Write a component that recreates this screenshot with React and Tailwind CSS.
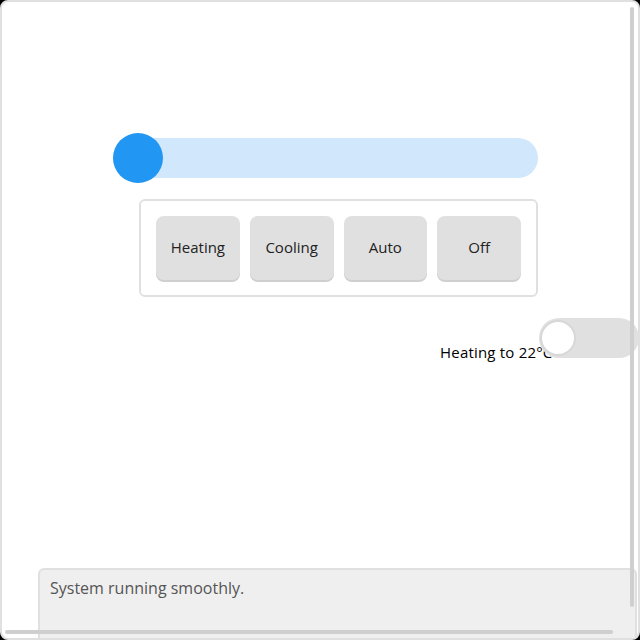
import { useState } from 'react';

const MODES = ['Heating', 'Cooling', 'Auto', 'Off'];

export default function App() {
  const [mode, setMode] = useState('Heating');
  const [on, setOn] = useState(false);

  return (
    <div className="w-[640px] h-[640px] bg-black" style={{ fontFamily: '"Open Sans", sans-serif' }}>
      <div className="relative w-full h-full bg-white border-2 border-[#e0e0e0] rounded-lg overflow-hidden">
        <div className="flex flex-col items-start">
          {/* temperature slider */}
          <div className="relative ml-[111px] mt-[131px] w-[425px] h-[50px] flex items-center">
            <div className="w-full h-[40px] rounded-full bg-[#d1e7fb]" />
            <div className="absolute left-0 top-0 w-[50px] h-[50px] rounded-full bg-[#2196f3]" />
          </div>

          {/* mode buttons */}
          <div className="ml-[137px] mt-[16px] w-[399px] border-2 border-[#e0e0e0] rounded-md p-[15px] flex gap-[10px]">
            {MODES.map(m => (
              <button
                key={m}
                onClick={() => setMode(m)}
                className="flex-1 h-[64px] rounded-lg bg-[#e0e0e0] shadow-[0_2px_0_#cfcfcf] text-[15px] text-[#222] pb-[2px]"
              >
                {m}
              </button>
            ))}
          </div>

          {/* status + toggle */}
          <div className="ml-[438px] mt-[21px] flex items-end">
            <span className="text-[15px] text-black leading-[18px] mb-[-3px] whitespace-nowrap tracking-[0.2px]">Heating to 22°C</span>
            <button
              onClick={() => setOn(!on)}
              className="relative -ml-[13px] w-[100px] h-[40px] rounded-full bg-[#e0e0e0] shrink-0"
            >
              <span className="absolute left-[1px] top-[2px] w-[36px] h-[36px] rounded-full bg-white border-2 border-[#d8d8d8]" />
            </button>
          </div>

          {/* log */}
          <div className="ml-[36px] mt-[210px] w-[599px] h-[80px] bg-[#efefef] border-2 border-[#e0e0e0] rounded-md px-[10px] py-[6px] text-[16px] text-[#555]">
            System running smoothly.
          </div>
        </div>

        {/* scrollbars */}
        <div className="absolute right-[4px] top-[5px] w-[4px] h-[600px] rounded-full bg-[#cfcfcf]" />
        <div className="absolute left-[3px] bottom-[4px] h-[4px] w-[608px] rounded-full bg-[#cfcfcf]" />
      </div>
    </div>
  );
}
